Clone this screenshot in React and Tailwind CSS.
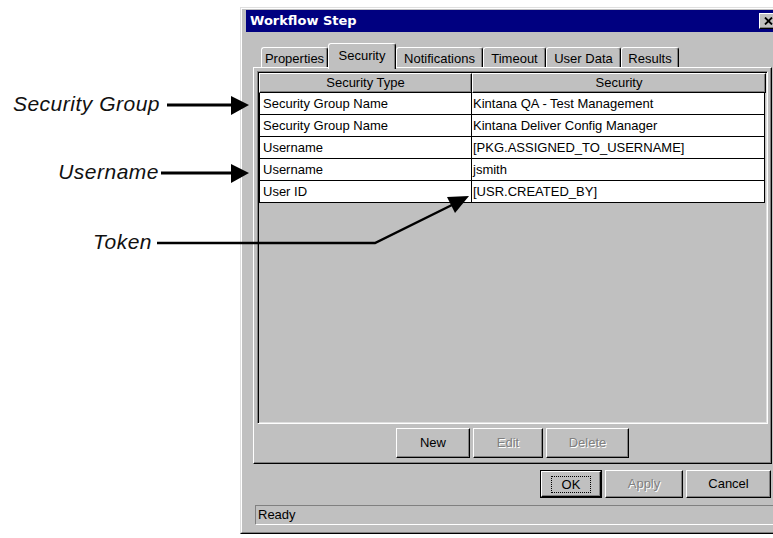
import { useState } from "react";

/* ─── DATA ─────────────────────────────────────────── */
const tabs = [
  { label: "Properties", w: 67 },
  { label: "Security", w: 68, active: true },
  { label: "Notifications", w: 87 },
  { label: "Timeout", w: 63 },
  { label: "User Data", w: 75 },
  { label: "Results", w: 58 },
];

const rows = [
  { type: "Security Group Name", value: "Kintana QA - Test Management" },
  { type: "Security Group Name", value: "Kintana Deliver Config Manager" },
  { type: "Username", value: "[PKG.ASSIGNED_TO_USERNAME]" },
  { type: "Username", value: "jsmith" },
  { type: "User ID", value: "[USR.CREATED_BY]" },
];

/* ─── WIN9X PIECES ─────────────────────────────────── */
function Button({ children, w, disabled, isDefault }) {
  const face = (
    <div
      className={`h-full flex items-center justify-center bg-[#c0c0c0] border-t border-l border-white border-r border-b border-r-black border-b-black shadow-[inset_-1px_-1px_0_#808080]
        ${disabled ? "text-[#808080] [text-shadow:1px_1px_0_#fff]" : "text-black"}`}
    >
      {isDefault ? (
        <span className="px-[10px] leading-[15px] border border-dotted border-black">{children}</span>
      ) : (
        children
      )}
    </div>
  );
  return (
    <div
      className={`h-full text-[13px] shrink-0 ${isDefault ? "border border-black" : ""}`}
      style={{ width: w }}
    >
      {face}
    </div>
  );
}

function Tab({ label, w, active }) {
  return (
    <div
      className={`bg-[#c0c0c0] border-t border-l border-white border-r border-r-black rounded-t-[3px] shadow-[inset_-1px_0_0_#808080] flex justify-center text-[13px] text-black
        ${active ? "h-[26px] -mb-[2px] relative z-10 pt-[2px]" : "h-[20px] pt-[1px]"}`}
      style={{ width: w }}
    >
      {label}
    </div>
  );
}

function SecurityList() {
  return (
    <div className="h-[353px] bg-[#c0c0c0] border-t border-l border-[#808080] border-r border-b border-r-white border-b-white shadow-[inset_1px_1px_0_#000,inset_-1px_-1px_0_#dfdfdf] p-[1px]">
      {/* header */}
      <div className="flex h-[20px] text-[13px]">
        <div className="w-[213px] flex items-center justify-center border-t border-l border-white border-r border-b border-r-black border-b-black shadow-[inset_-1px_-1px_0_#808080]">
          Security Type
        </div>
        <div className="flex-1 flex items-center justify-center border-t border-l border-white border-r border-b border-r-black border-b-black shadow-[inset_-1px_-1px_0_#808080]">
          Security
        </div>
      </div>
      {/* rows */}
      <div className="mr-[1px]">
        {rows.map((r, i) => (
          <div key={i} className="flex h-[22px] bg-white border-b border-l border-r border-black text-[13px]">
            <div className="w-[212px] border-r border-black pl-[3px] flex items-center">{r.type}</div>
            <div className="flex-1 pl-[1px] flex items-center">{r.value}</div>
          </div>
        ))}
      </div>
    </div>
  );
}

/* ─── CALLOUTS ─────────────────────────────────────── */
function Arrows() {
  return (
    <svg className="absolute inset-0 pointer-events-none" width="773" height="538" viewBox="0 0 773 538">
      <line x1="167" y1="105" x2="236" y2="105" stroke="#000" strokeWidth="3" />
      <polygon points="231,96 249,105 231,115" fill="#000" />
      <line x1="161" y1="173" x2="236" y2="173" stroke="#000" strokeWidth="3" />
      <polygon points="231,164 249,173 231,183" fill="#000" />
      <polyline points="157,243 375,243 456,203" fill="none" stroke="#000" strokeWidth="2.5" />
      <polygon points="469,196 447,197 455,213" fill="#000" />
    </svg>
  );
}

/* ─── MAIN ──────────────────────────────────────────── */
export default function App() {
  const [tab] = useState("Security");
  return (
    <div className="relative w-[773px] h-[538px] overflow-hidden bg-white font-['Liberation_Sans',Arial,sans-serif] text-black">
      <div className="flex">
        {/* callout labels */}
        <div className="w-[240px] shrink-0 flex flex-col text-[21px] italic leading-[24px] tracking-[0.5px] text-[#111]">
          <div className="mt-[92px] text-right pr-[80px]">Security Group</div>
          <div className="mt-[44px] text-right pr-[81px]">Username</div>
          <div className="mt-[46px] text-right pr-[88px]">Token</div>
        </div>

        {/* dialog */}
        <div className="mt-[7px] w-[545px] h-[527px] shrink-0 border-t border-l border-[#dfdfdf] border-r border-b border-r-black border-b-black">
          <div className="h-full bg-[#c0c0c0] border-t border-l border-white border-r border-b border-r-[#808080] border-b-[#808080] pt-[1px] px-[4px] flex flex-col">
            {/* title bar */}
            <div className="h-[22px] bg-[#000080] flex items-center justify-between pl-[4px] pr-[2px]">
              <span className="text-white font-bold text-[13px] font-['DejaVu_Sans',sans-serif]">Workflow Step</span>
              <div className="w-[18px] h-[16px] bg-[#c0c0c0] border-t border-l border-white border-r border-b border-r-black border-b-black shadow-[inset_-1px_-1px_0_#808080] flex items-center justify-center">
                <svg width="9" height="8" viewBox="0 0 9 8">
                  <path d="M1 0.5 L8 7.5 M8 0.5 L1 7.5" stroke="#000" strokeWidth="1.8" />
                </svg>
              </div>
            </div>

            <div className="px-[7px] flex flex-col">
              {/* tabs */}
              <div className="mt-[11px] h-[24px] flex items-end pl-[8px]">
                {tabs.map((t) => (
                  <Tab key={t.label} label={t.label} w={t.w} active={t.label === tab} />
                ))}
              </div>

              {/* tab page */}
              <div className="h-[397px] border-t border-l border-white border-r border-b border-r-black border-b-black shadow-[inset_-1px_-1px_0_#808080] pt-[3px] px-[3px] pb-[4px] flex flex-col">
                <SecurityList />
                <div className="mt-[4px] h-[30px] flex justify-center gap-[3px]">
                  <Button w={74}>New</Button>
                  <Button w={70} disabled>Edit</Button>
                  <Button w={83} disabled>Delete</Button>
                </div>
              </div>

              {/* dialog buttons */}
              <div className="mt-[6px] h-[28px] flex justify-end gap-[3px] pr-[1px]">
                <Button w={62} isDefault>OK</Button>
                <Button w={78} disabled>Apply</Button>
                <Button w={85}>Cancel</Button>
              </div>
            </div>

            {/* status bar */}
            <div className="mt-[7px] ml-[9px] h-[20px] border-t border-l border-[#808080] border-r border-b border-r-white border-b-white flex items-center pl-[2px] text-[13px]">
              Ready
            </div>
          </div>
        </div>
      </div>

      <Arrows />
    </div>
  );
}
